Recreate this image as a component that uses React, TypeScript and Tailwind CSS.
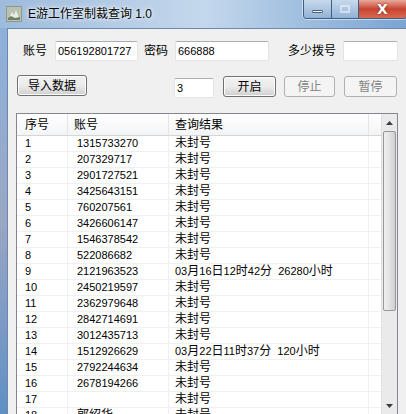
import React from 'react';

const rows: [string, string, string][] = [
  ['1', '1315733270', '未封号'],
  ['2', '207329717', '未封号'],
  ['3', '2901727521', '未封号'],
  ['4', '3425643151', '未封号'],
  ['5', '760207561', '未封号'],
  ['6', '3426606147', '未封号'],
  ['7', '1546378542', '未封号'],
  ['8', '522086682', '未封号'],
  ['9', '2121963523', '03月16日12时42分 26280小时'],
  ['10', '2450219597', '未封号'],
  ['11', '2362979648', '未封号'],
  ['12', '2842714691', '未封号'],
  ['13', '3012435713', '未封号'],
  ['14', '1512926629', '03月22日11时37分 120小时'],
  ['15', '2792244634', '未封号'],
  ['16', '2678194266', '未封号'],
  ['17', '', '未封号'],
  ['18', '郭绍华', '未封号'],
];

// digits in an 11px latin face, CJK runs a bit bigger like the bitmap font
const Mixed: React.FC<{ text: string }> = ({ text }) => (
  <>
    {text.split(/([\u4e00-\u9fff]+)/).map((part, i) =>
      /[\u4e00-\u9fff]/.test(part) ? (
        <span key={i} className="text-[12px]">{part}</span>
      ) : (
        <span key={i} className="whitespace-pre">{part.replace(' ', '  ')}</span>
      )
    )}
  </>
);

const Field: React.FC<{ value?: string; className: string }> = ({ value, className }) => (
  <div
    className={`h-[20px] bg-white border border-[#e2e3ea] border-t-[#abadb3] rounded-[2px] pl-[2px] flex items-center text-[11px] text-black overflow-hidden whitespace-nowrap ${className}`}
  >
    {value}
  </div>
);

const Button: React.FC<{ label: string; disabled?: boolean; className: string }> = ({ label, disabled, className }) => (
  <div
    className={`h-[21px] rounded-[3px] border flex items-center justify-center text-[12px] ${
      disabled
        ? 'border-[#adb2b5] bg-[#f4f4f4] text-[#838383]'
        : 'border-[#707070] bg-gradient-to-b from-[#f2f2f2] via-[#ebebeb] to-[#cfcfcf] text-black shadow-[inset_0_0_0_1px_#fcfcfc]'
    } ${className}`}
  >
    {label}
  </div>
);

export default function App() {
  return (
    <div className="w-[406px] h-[414px] overflow-hidden flex flex-col bg-gradient-to-b from-[#9fbfe2] to-[#6e97c6] font-['Liberation_Sans','Noto_Sans_CJK_SC',sans-serif] select-none">
      {/* title bar */}
      <div className="h-[28px] shrink-0 flex items-start justify-between bg-gradient-to-r from-[#9ebbdc] via-[#c4d8ec] to-[#7ba4d2]">
        <div className="flex items-center h-[28px] pl-[6px]">
          <svg width="16" height="16" viewBox="0 0 16 16">
            <rect width="16" height="16" fill="#8d9a8a" />
            <rect x="1" y="1" width="14" height="14" fill="#b7c2b0" />
            <path d="M3 12 L6 6 L8 9 L10 4 L13 12 Z" fill="#e8ece4" />
            <path d="M2 14 L14 14 L14 11 L9 12 L5 10 L2 12 Z" fill="#6f7f6c" />
          </svg>
          <span className="ml-[6px] text-[12px] text-black [text-shadow:0_0_6px_#ffffff,0_0_3px_#ffffff]">E游工作室制裁查询 1.0</span>
        </div>
        <div className="flex h-[19px] mr-[-1px] rounded-b-[4px] overflow-hidden border border-t-0 border-[#3d5f86] shadow-[0_0_0_1px_rgba(255,255,255,0.5)]">
          <div className="w-[28px] flex items-center justify-center bg-gradient-to-b from-[#c8d9ec] to-[#92b2d5] border-r border-[#3d5f86]">
            <div className="w-[11px] h-[3px] mt-[5px] bg-white border border-[#4b5f78] rounded-[1px]" />
          </div>
          <div className="w-[27px] flex items-center justify-center bg-gradient-to-b from-[#c8d9ec] to-[#92b2d5] border-r border-[#3d5f86]">
            <div className="w-[10px] h-[8px] border-2 border-[#e4ecf5] opacity-70" />
          </div>
          <div className="w-[47px] flex items-center justify-center bg-gradient-to-b from-[#e8a99d] via-[#c8412f] to-[#d86a52]">
            <span className="text-white text-[14px] font-bold font-['DejaVu_Sans',sans-serif] leading-none [text-shadow:0_0_2px_#5a1a10]">X</span>
          </div>
        </div>
      </div>

      {/* frame + client */}
      <div className="flex flex-1 min-h-0">
        <div className="w-[7px] shrink-0 bg-gradient-to-b from-[#8db1da] via-[#9aa6c4] to-[#5f8fc4]" />
        <div className="flex-1 min-h-0 flex flex-col bg-[#f0f0f0] border-t border-l border-[#6a89ad]">
          {/* row 1 */}
          <div className="flex items-center mt-[12px] text-[12px] text-black">
            <span className="ml-[15px] w-[32px]">账号</span>
            <Field value="056192801727" className="w-[83px]" />
            <span className="ml-[6px] w-[31px]">密码</span>
            <Field value="666888" className="w-[94px]" />
            <span className="ml-[19px] w-[55px]">多少拨号</span>
            <Field className="w-[55px]" />
          </div>

          {/* row 2 */}
          <div className="flex items-start mt-[14px]">
            <Button label="导入数据" className="ml-[9px] w-[70px]" />
            <Field value="3" className="ml-[87px] mt-[3px] w-[40px] h-[19px]" />
            <Button label="开启" className="ml-[9px] mt-[1px] w-[53px]" />
            <Button label="停止" disabled className="ml-[8px] mt-[1px] w-[51px]" />
            <Button label="暂停" disabled className="ml-[9px] mt-[1px] w-[53px]" />
          </div>

          {/* list view */}
          <div className="flex-1 min-h-0 mt-[15px] ml-[8px] w-[382px] bg-white border border-[#828790] border-b-0 flex overflow-hidden">
            <div className="flex-1 min-w-0 flex flex-col">
              <div className="h-[22px] shrink-0 flex text-[12px] text-black bg-gradient-to-b from-[#ffffff] to-[#f3f4f6] border-b border-[#d5d5d5]">
                <div className="w-[51px] pl-[8px] flex items-center border-r border-[#e5e5e5]">序号</div>
                <div className="w-[101px] pl-[6px] flex items-center border-r border-[#e5e5e5]">账号</div>
                <div className="w-[200px] pl-[6px] flex items-center border-r border-[#e5e5e5]">查询结果</div>
                <div className="flex-1" />
              </div>
              {rows.map(([n, acc, res]) => (
                <div key={n} className="h-[16px] shrink-0 flex text-[11px] leading-[15px] text-black border-b border-[#f0f0f0]">
                  <div className="w-[51px] pl-[8px] border-r border-[#f0f0f0]">{n}</div>
                  <div className="w-[101px] pl-[9px] border-r border-[#f0f0f0]"><Mixed text={acc} /></div>
                  <div className="w-[200px] pl-[6px] border-r border-[#f0f0f0] whitespace-nowrap"><Mixed text={res} /></div>
                  <div className="flex-1" />
                </div>
              ))}
            </div>

            {/* scrollbar */}
            <div className="w-[16px] shrink-0 flex flex-col bg-[#eaeaea] border-l border-[#e0e0e0]">
              <div className="h-[17px] shrink-0 flex items-center justify-center">
                <svg width="7" height="4" viewBox="0 0 7 4"><path d="M0 4 L3.5 0 L7 4 Z" fill="#3c3c3c" /></svg>
              </div>
              <div className="h-[180px] shrink-0 mx-[1px] rounded-[2px] border border-[#979797] bg-gradient-to-r from-[#f0f0f0] via-[#e2e2e2] to-[#d0d0d0]" />
              <div className="flex-1" />
              <div className="h-[17px] shrink-0 flex items-center justify-center">
                <svg width="7" height="4" viewBox="0 0 7 4"><path d="M0 0 L7 0 L3.5 4 Z" fill="#3c3c3c" /></svg>
              </div>
            </div>
          </div>
        </div>
      </div>
    </div>
  );
}
